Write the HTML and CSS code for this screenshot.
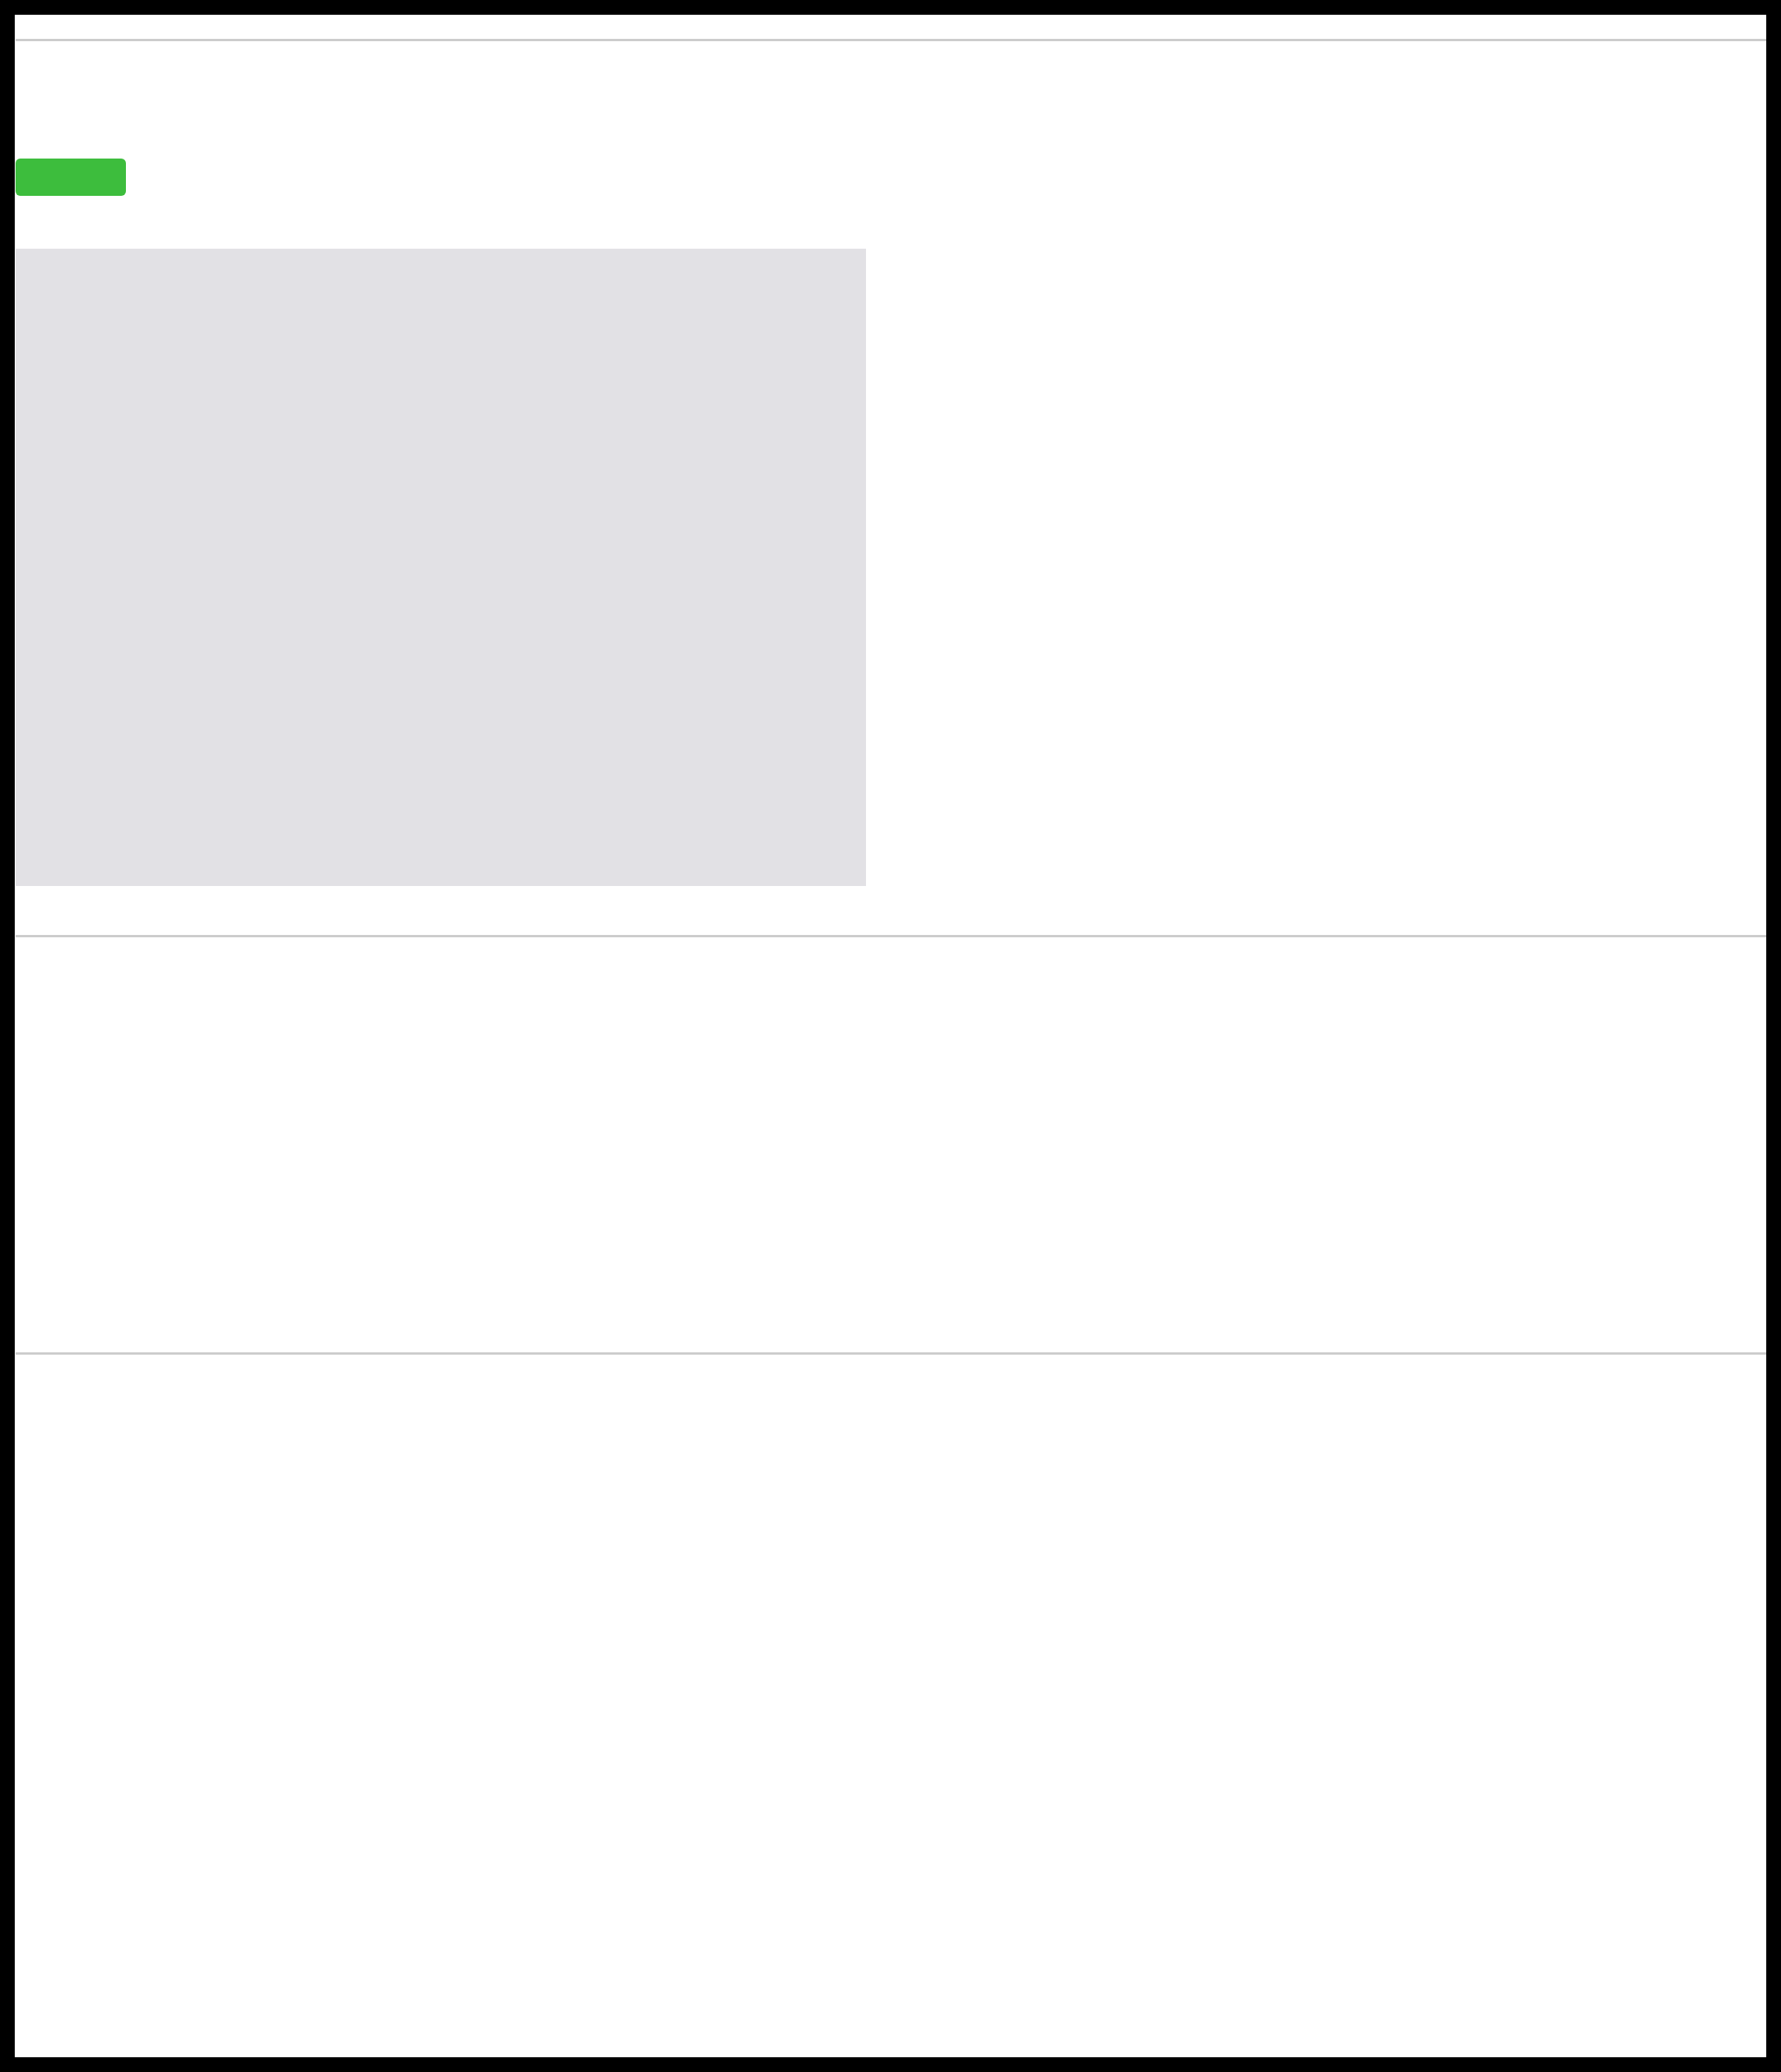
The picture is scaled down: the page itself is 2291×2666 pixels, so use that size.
FILE: index.html
```html
<!DOCTYPE html>
<html>
<head>
    <title>Page</title>
    <link rel="stylesheet" href="styles.css">
</head>
<body>
    <div class="page">
        <div class="rule top"></div>
        <section class="main">
            <button class="greenBtn" type="button"></button>
            <div class="preview"></div>
        </section>
        <div class="rule"></div>
        <section class="middle"></section>
        <div class="rule"></div>
        <section class="bottom"></section>
    </div>
</body>
</html>
```

FILE: styles.css
```css
html, body {
    margin: 0;
    padding: 0;
    background: #000;
}
body {
    padding: 19px;
    font-family: 'Liberation Sans', sans-serif;
}
.page {
    background: #fff;
    height: 2628px;
    padding-left: 1px;
    display: flex;
    flex-direction: column;
}
.rule {
    height: 3px;
    background: #cccccc;
}
.rule.top {margin-top: 31px;}

.main {
    display: flex;
    flex-direction: column;
    align-items: flex-start;
    padding-top: 151px;
    padding-bottom: 63px;
}
.greenBtn {
    width: 142px;
    height: 48px;
    background: #3dbd3d;
    border: none;
    border-radius: 6px;
    padding: 0;
}
.preview {
    margin-top: 68px;
    width: 1094px;
    height: 820px;
    background: #e2e1e5;
}
.middle {height: 534px;}
.bottom {flex: 1;}
```
